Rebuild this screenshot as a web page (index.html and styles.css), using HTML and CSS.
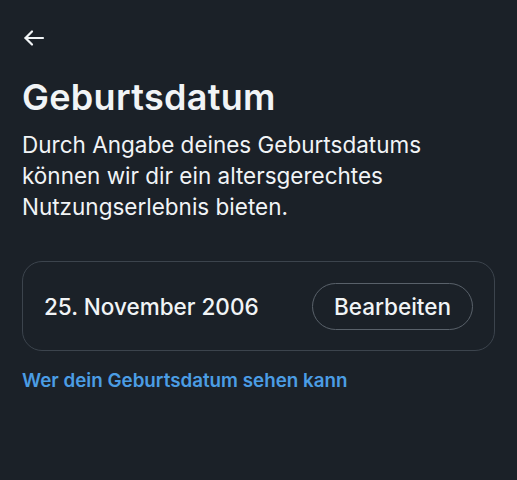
FILE: index.html
```html
<!DOCTYPE html>
<html>
<head>
    <title>Geburtsdatum</title>
    <link rel="stylesheet" href="styles.css">
</head>
<body>
    <div class="page">
        <!-- back arrow -->
        <button class="back" type="button">
            <svg width="24" height="24" viewBox="0 0 24 24" fill="none" stroke="#f1f4f6" stroke-width="2.2" stroke-linecap="round" stroke-linejoin="round">
                <path d="M21 12H3.5"/>
                <path d="M10 5.5L3.5 12l6.5 6.5"/>
            </svg>
        </button>

        <h1 class="title">Geburtsdatum</h1>
        <p class="intro">Durch Angabe deines Geburtsdatums können wir dir ein altersgerechtes Nutzungserlebnis bieten.</p>

        <div class="date-card">
            <span class="date">25. November 2006</span>
            <button class="edit" type="button">Bearbeiten</button>
        </div>

        <a class="link" href="#">Wer dein Geburtsdatum sehen kann</a>
    </div>
</body>
</html>
```

FILE: styles.css
```css
body {
    margin: 0;
    background-color: #1b2128;
    color: #f1f4f6;
    font-family: Inter, "Noto Sans", sans-serif;
}

.page {
    padding: 26px 22px 0 22px;
}

.back {
    background: none;
    border: none;
    padding: 0;
    display: block;
    width: 24px;
    height: 24px;
    cursor: pointer;
}

.title {
    margin: 25px 0 0 0;
    font-size: 36px;
    font-weight: 600;
    line-height: 44px;
    letter-spacing: 0.3px;
}

.intro {
    margin: 10px 0 0 0;
    font-size: 22.5px;
    line-height: 31px;
    width: 440px;
}

/* CSS for the rounded date box */
.date-card {
    margin-top: 39px;
    height: 90px;
    box-sizing: border-box;
    border: 1px solid #3c444d;
    border-radius: 20px;
    display: flex;
    align-items: center;
    justify-content: space-between;
    padding: 0 21px 0 21px;
}

.date {
    font-size: 22.5px;
    font-weight: 500;
}

.edit {
    height: 47px;
    padding: 0 21px;
    background: none;
    border: 1px solid #59616a;
    border-radius: 24px;
    color: #f1f4f6;
    font-family: inherit;
    font-size: 22.5px;
    font-weight: 500;
    cursor: pointer;
}

.link {
    display: block;
    margin-top: 18px;
    color: #4b9de4;
    font-size: 18.8px;
    line-height: 23px;
    font-weight: 600;
    text-decoration: none;
}
```
